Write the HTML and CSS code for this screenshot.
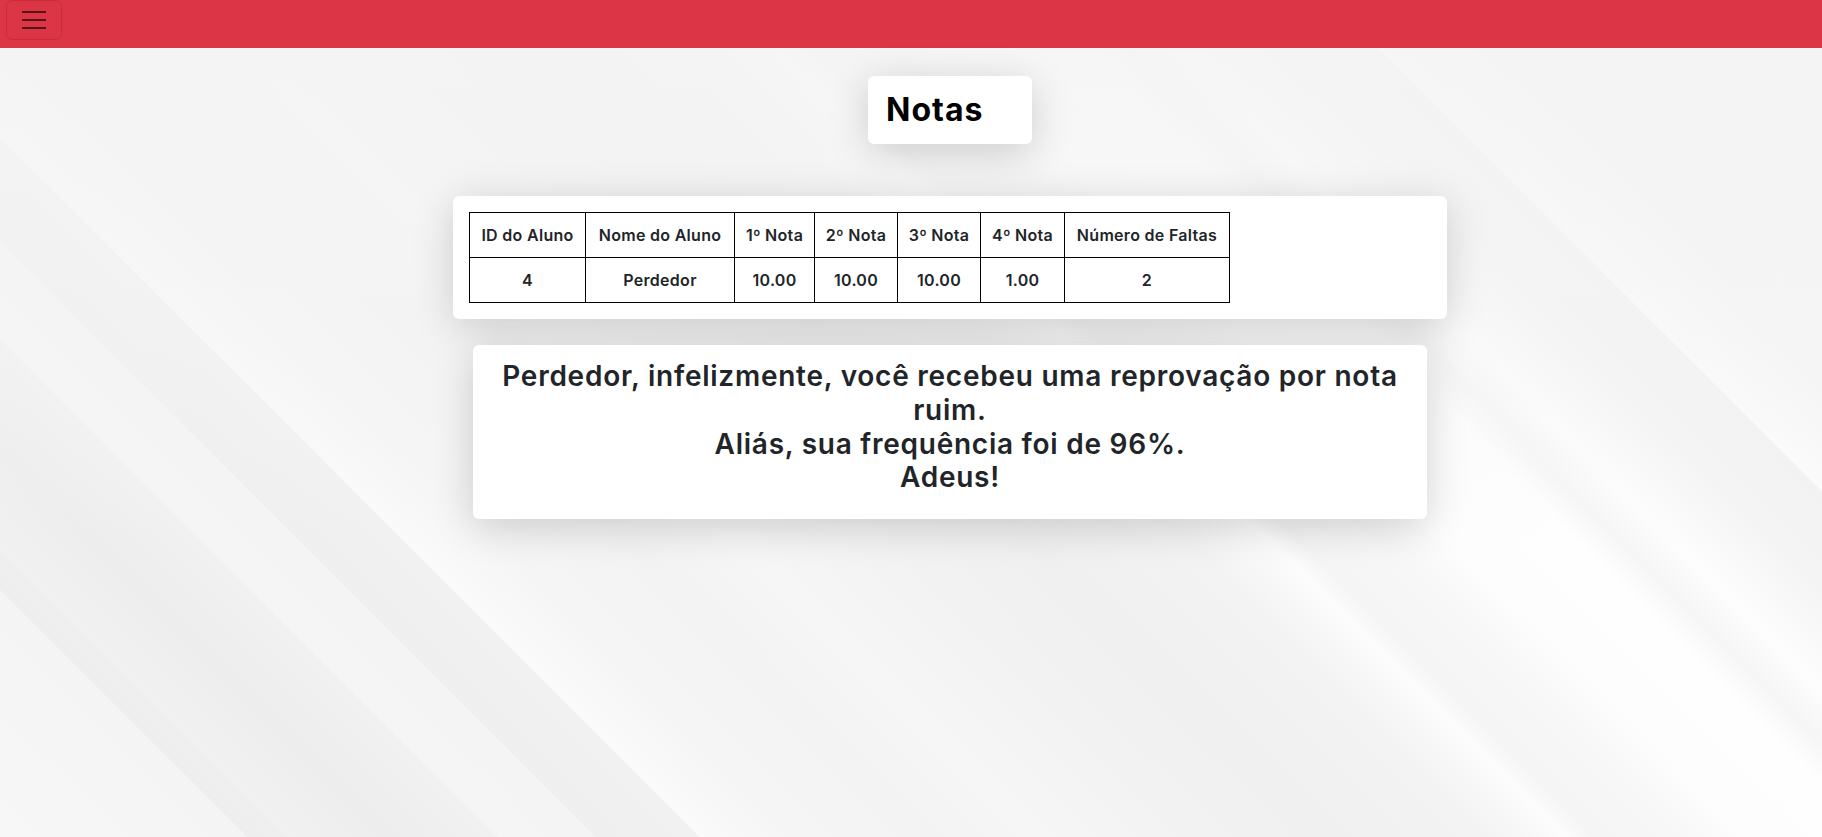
FILE: index.html
```html
<!DOCTYPE html>
<html lang="pt-BR">
<head>
<meta charset="utf-8">
<title>Notas</title>
<link rel="stylesheet" href="styles.css">
</head>
<body>
<nav class="navbar">
  <button class="toggler" type="button" aria-label="Menu">
    <span class="bar"></span><span class="bar"></span><span class="bar"></span>
  </button>
</nav>
<main class="page">
  <div class="card title-card"><h1 class="title">Notas</h1></div>
  <div class="card table-card">
    <table class="grades">
      <colgroup>
        <col class="c-id"><col class="c-name"><col class="c-n"><col class="c-n2"><col class="c-n2"><col class="c-n3"><col class="c-f">
      </colgroup>
      <thead>
        <tr><th>ID do Aluno</th><th>Nome do Aluno</th><th>1º Nota</th><th>2º Nota</th><th>3º Nota</th><th>4º Nota</th><th>Número de Faltas</th></tr>
      </thead>
      <tbody>
        <tr><td>4</td><td>Perdedor</td><td>10.00</td><td>10.00</td><td>10.00</td><td>1.00</td><td>2</td></tr>
      </tbody>
    </table>
  </div>
  <div class="card msg-card">
    <h3 class="msg">Perdedor, infelizmente, você recebeu uma reprovação por nota<br>ruim.<br>Aliás, sua frequência foi de 96%.<br>Adeus!</h3>
  </div>
</main>
</body>
</html>
```
FILE: styles.css
```css
html, body {
  margin: 0;
  padding: 0;
}
body {
  min-height: 837px;
  font-family: Inter, "Open Sans", "Liberation Sans", sans-serif;
  color: #212529;
  background-color: #f3f3f3;
  background-image:
    linear-gradient(to bottom, rgba(244,244,244,0.85) 0%, rgba(244,244,244,0.5) 35%, rgba(244,244,244,0) 65%),
    linear-gradient(45deg,
      #f7f7f7 0%, #f4f4f4 9.3%,
      #eeeeee 9.3%, #efefef 10.8%,
      #f1f1f1 10.8%, #ededed 14.6%, #f1f1f1 18.7%,
      #f5f5f5 18.7%, #f4f4f4 22.4%,
      #efefef 22.4%, #f1f1f1 26.3%,
      #fafafa 26.3%, #f5f5f5 30%,
      #f3f3f3 35%, #f6f6f6 39%, #f2f2f2 45%,
      #f0f0f0 49.9%, #f3f3f3 55.9%,
      #fcfcfc 58.9%, #f5f5f5 60%, #f7f7f7 63%,
      #fdfdfd 65.7%, #fefefe 70.5%,
      #f6f6f6 72.1%, #fdfdfd 74%, #f4f4f4 78%,
      #f2f2f2 81.5%, #fcfcfc 81.5%, #f5f5f5 86%, #f4f4f4 100%);
}
.navbar {
  height: 48px;
  background: #dc3545;
  display: flex;
  align-items: flex-start;
  padding: 0 6px;
  box-sizing: border-box;
}
.toggler {
  width: 56px;
  height: 40px;
  border: 1px solid rgba(0,0,0,0.1);
  border-radius: 6px;
  background: transparent;
  display: flex;
  flex-direction: column;
  align-items: center;
  justify-content: center;
  gap: 6px;
  padding: 0;
}
.bar {
  display: block;
  width: 24px;
  height: 2px;
  background: rgba(0,0,0,0.6);
}
.page {
  display: flex;
  flex-direction: column;
  align-items: center;
  padding: 28px 0 0 78px;
}
.card {
  background: #fff;
  border-radius: 6px;
  box-shadow: 0 8px 40px rgba(0,0,0,0.17);
  box-sizing: border-box;
}
.title-card {
  width: 164px;
  padding: 15px 18px;
  margin-bottom: 52px;
}
.title {
  margin: 0;
  font-size: 32px;
  line-height: 1.2;
  font-weight: 700;
  color: #000;
  letter-spacing: 1px;
}
.table-card {
  width: 994px;
  padding: 16px;
  margin-bottom: 26px;
}
.grades {
  border-collapse: collapse;
  table-layout: fixed;
  width: 760px;
  font-size: 16px;
  font-weight: 600;
  letter-spacing: 0.3px;
  color: #212529;
}
.grades th, .grades td {
  border: 1px solid #000;
  padding: 10px 2px;
  line-height: 24px;
  text-align: center;
  white-space: nowrap;
}
.grades th { font-weight: 600; }
.c-id { width: 116px; }
.c-name { width: 149px; }
.c-n { width: 80px; }
.c-n2 { width: 83px; }
.c-n3 { width: 84px; }
.c-f { width: 165px; }
.msg-card {
  width: 954px;
  padding: 15px 16px 16px;
  text-align: center;
}
.msg {
  margin: 0 0 8px;
  font-size: 28px;
  line-height: 1.2;
  font-weight: 600;
  letter-spacing: 0.75px;
  color: #212529;
}
```
